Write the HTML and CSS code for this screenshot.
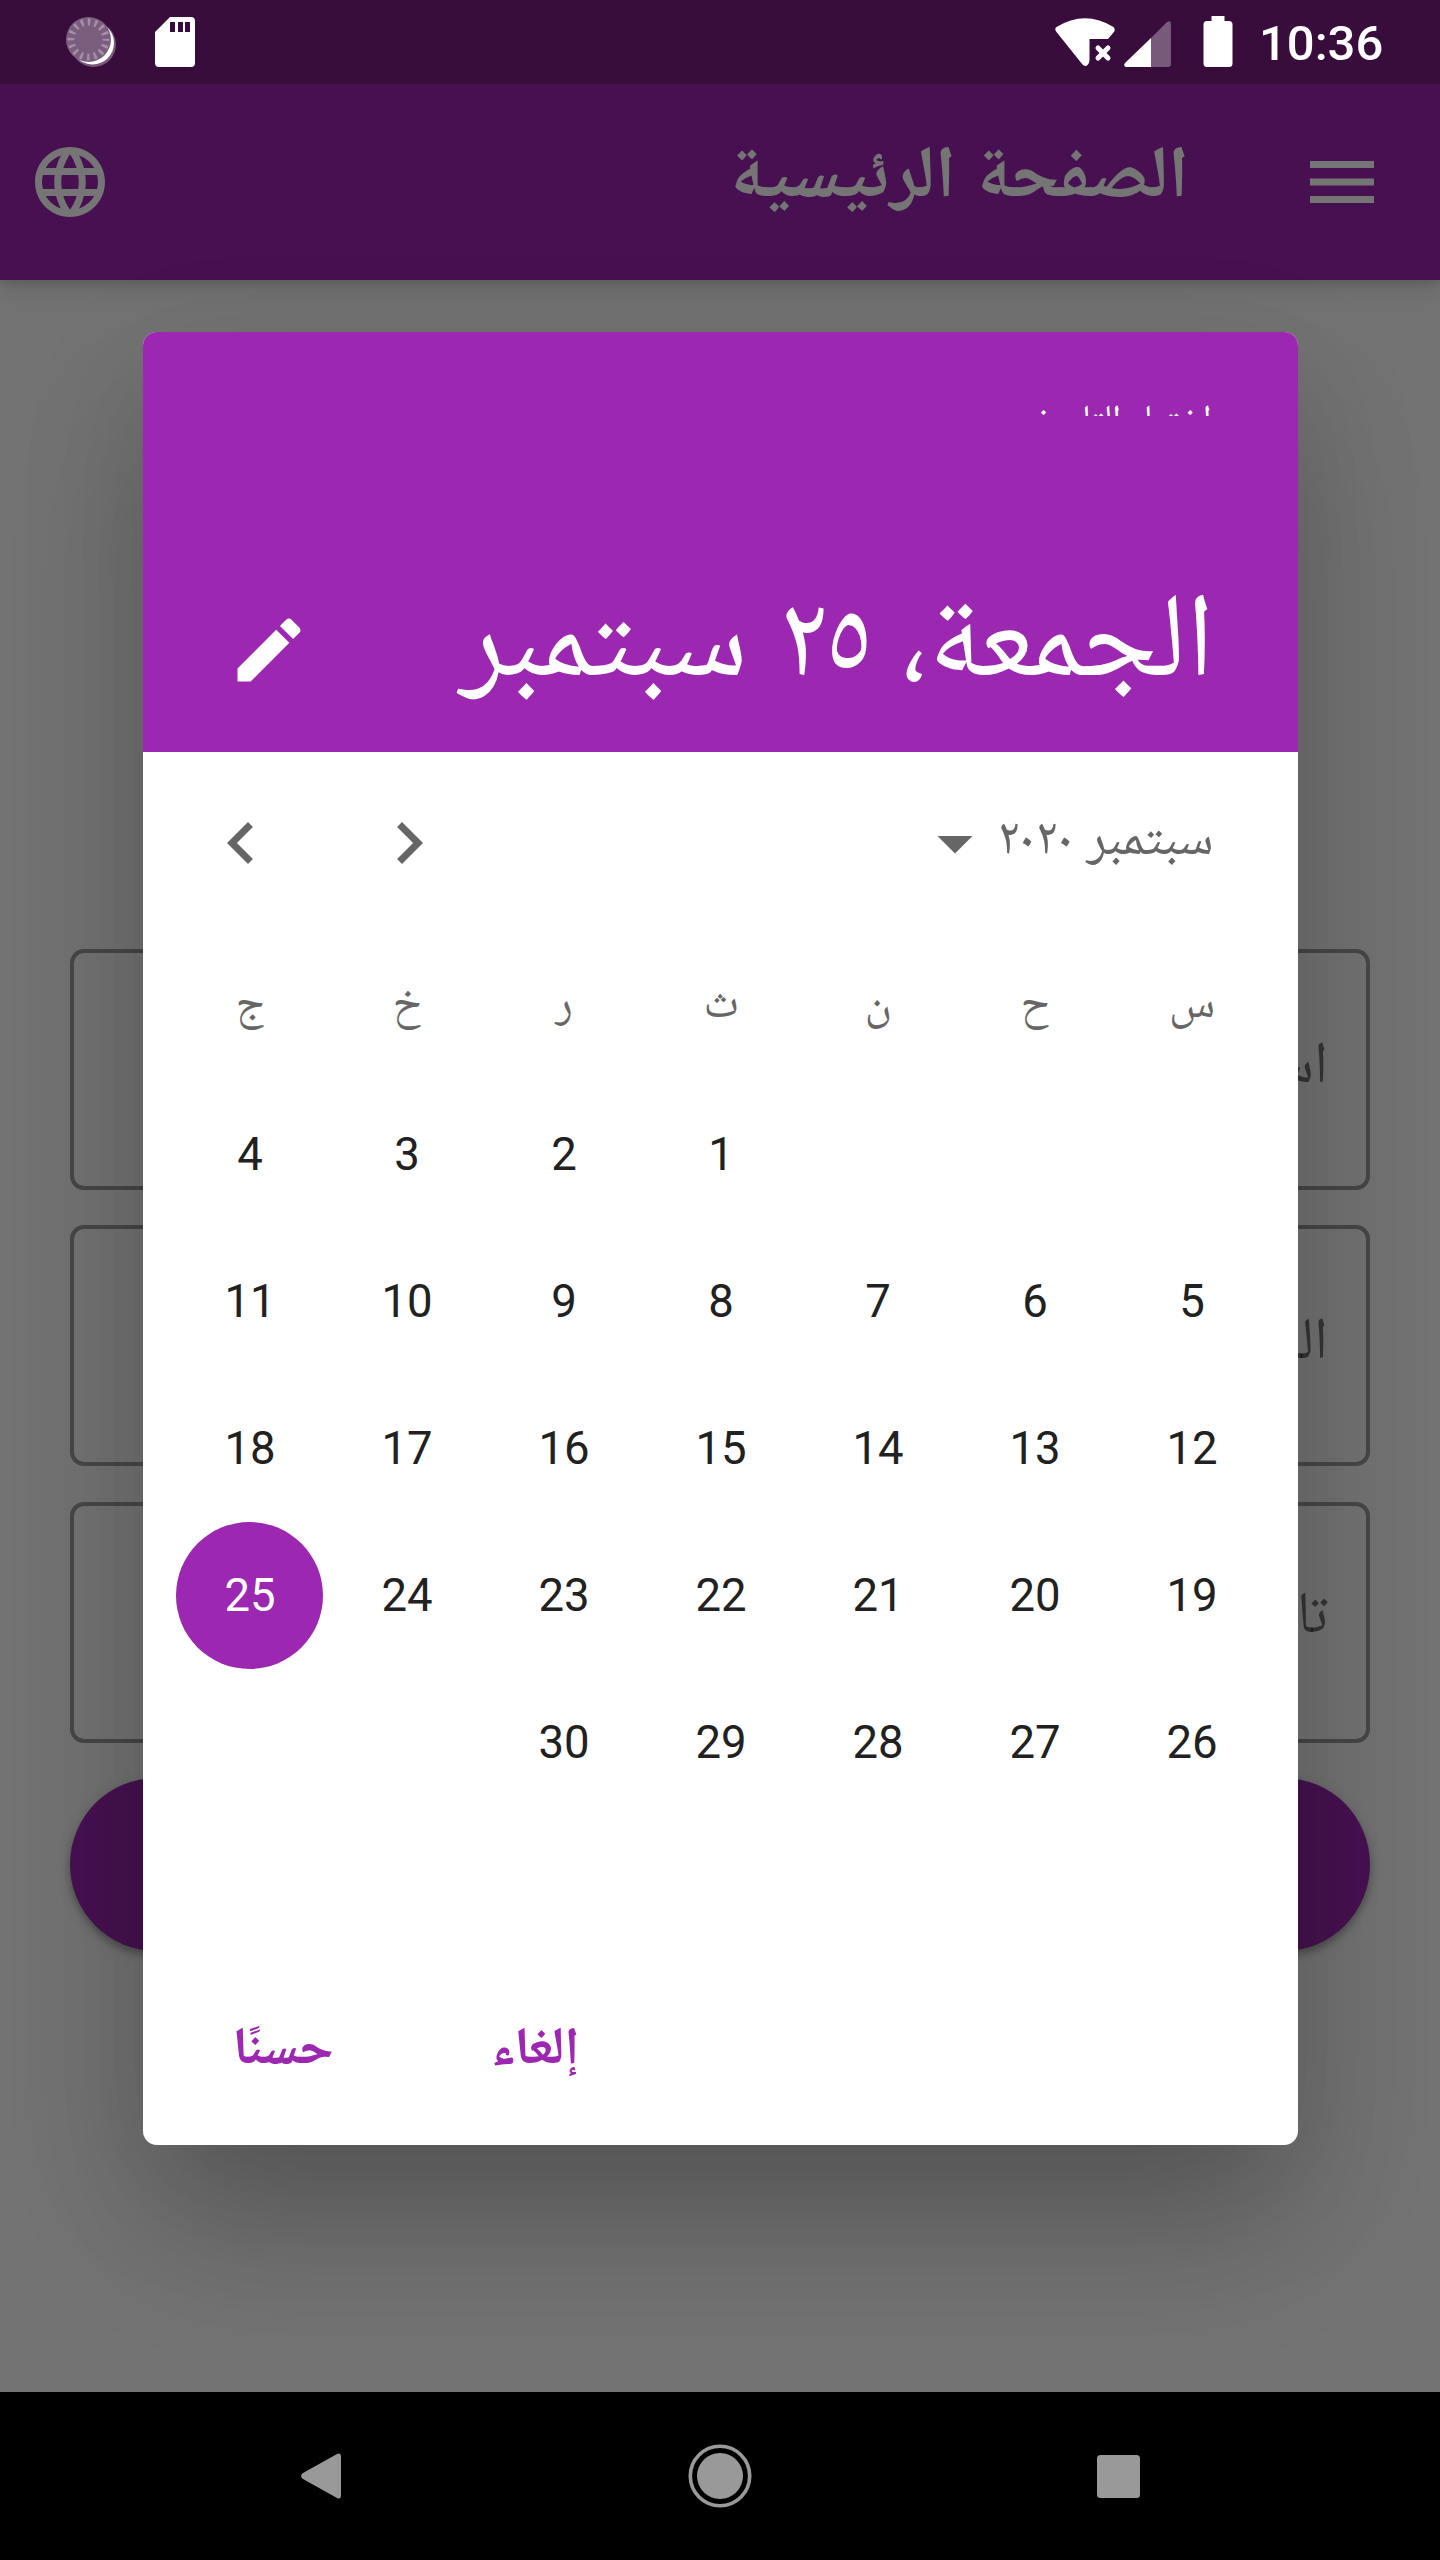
FILE: index.html
```html
<!DOCTYPE html>
<html lang="ar" dir="rtl">
<head>
<meta charset="utf-8">
<title>الصفحة الرئيسية</title>
<link rel="stylesheet" href="styles.css">
</head>
<body>
<div class="screen">
  <header class="status" dir="ltr">
    <div class="status-start">
      <svg class="ic-sync" width="50" height="50" viewBox="0 0 50 50"><circle cx="27.500" cy="27.500" r="22.500" fill="#77597a"/><circle cx="26.500" cy="26" r="21.500" fill="#fff"/><circle cx="22.500" cy="22.500" r="22.500" fill="#7b5d7e"/><circle cx="22.500" cy="22.500" r="17.500" fill="none" stroke="#a68ea9" stroke-width="7" stroke-dasharray="2.600 4.273" stroke-dashoffset="1.300"/></svg>
      <svg width="40" height="50" viewBox="0 0 40 50"><path fill="#fff" fill-rule="evenodd" d="M15 0H36Q40 0 40 4V46Q40 50 36 50H4Q0 50 0 46V15ZM15 5V15H20V5ZM23 5V15H28V5ZM30 5V15H35V5Z"/></svg>
    </div>
    <div class="status-end">
      <svg class="ic-wifi" width="60" height="48" viewBox="0 0 60 48"><path fill="#fff" d="M1.500 9Q30-8.500 58.500 9Q61 12 58.500 14.500L53 21H34.500V42Q34.500 45 32.500 47Q30 49 27.500 46.500L1.500 14Q-1 11 1.500 9Z"/><path stroke="#fff" stroke-width="5" stroke-linecap="round" d="M43 30 53 40M53 30 43 40"/></svg>
      <svg class="ic-cell" width="48" height="48" viewBox="0 0 48 48"><path fill="#775a7a" d="M43 2Q47 0 47 4V44Q47 47 44 47H27V18Z"/><path fill="#fff" d="M27 18V47H2Q-1 46 1 43Z"/></svg>
      <svg class="ic-battery" width="30" height="51" viewBox="0 0 30 51"><path fill="#fff" d="M8.500 0H21.500V5H26Q29.500 5 29.500 8.500V47.500Q29.500 51 26 51H4Q.5 51 .5 47.500V8.500Q.5 5 4 5H8.500Z"/></svg>
      <span class="clock">10:36</span>
    </div>
  </header>
  <div class="appbar">
    <svg class="ic-menu" width="64" height="42" viewBox="0 0 64 42"><path fill="#fff" d="M0 0H64V7H0ZM0 17.500H64V24.500H0ZM0 35H64V42H0Z"/></svg>
    <h1 class="title"><span class="t-title">الصفحة الرئيسية</span></h1>
    <svg class="ic-globe" width="84" height="84" viewBox="0 0 24 24"><path fill="#fff" d="M11.990 2C6.470 2 2 6.480 2 12s4.470 10 9.990 10C17.520 22 22 17.520 22 12S17.520 2 11.990 2zm6.930 6h-2.950c-.32-1.250-.78-2.450-1.380-3.560 1.840.63 3.370 1.910 4.330 3.560zM12 4.040c.83 1.200 1.480 2.530 1.910 3.960h-3.820c.43-1.430 1.080-2.760 1.910-3.960zM4.260 14C4.100 13.360 4 12.690 4 12s.1-1.360.26-2h3.380c-.08.66-.14 1.320-.14 2s.06 1.340.14 2H4.260zm.82 2h2.950c.32 1.250.78 2.450 1.380 3.560-1.840-.63-3.370-1.900-4.330-3.560zm2.950-8H5.080c.96-1.660 2.490-2.930 4.330-3.560C8.810 5.550 8.350 6.750 8.030 8zM12 19.960c-.83-1.200-1.480-2.530-1.910-3.960h3.820c-.43 1.430-1.080 2.760-1.910 3.960zM14.340 14H9.660c-.09-.66-.16-1.320-.16-2s.07-1.350.16-2h4.680c.09.65.16 1.320.16 2s-.07 1.340-.16 2zm.25 5.560c.6-1.110 1.060-2.310 1.380-3.560h2.950c-.96 1.650-2.490 2.930-4.330 3.560zM16.360 14c.08-.66.14-1.320.14-2s-.06-1.340-.14-2h3.380c.16.64.26 1.310.26 2s-.1 1.360-.26 2h-3.380z"/></svg>
  </div>
  <main class="form">
    <div class="field"><span>اسم</span></div>
    <div class="field"><span>السن</span></div>
    <div class="field field-date"><span>تاريخ</span></div>
    <div class="submit"></div>
  </main>
  <nav class="navbar" dir="ltr">
    <svg width="42" height="46" viewBox="0 0 42 46"><path fill="#999" d="M37 1Q41-1 41 4V42Q41 47 37 45L3 26Q-1 23 3 20Z"/></svg>
    <svg width="64" height="64" viewBox="0 0 64 64"><circle cx="32" cy="32" r="29.700" fill="none" stroke="#999" stroke-width="3.600"/><circle cx="32" cy="32" r="23" fill="#999"/></svg>
    <svg width="43" height="43" viewBox="0 0 43 43"><rect width="43" height="43" rx="3.500" fill="#999"/></svg>
  </nav>
  <div class="scrim"></div>
  <section class="dialog">
    <div class="head">
      <div class="help"><span class="t-help">اختيار التاريخ</span></div>
      <div class="head-row">
        <span class="t-date">الجمعة، ٢٥ سبتمبر</span>
        <svg class="ic-edit" width="84" height="84" viewBox="0 0 24 24"><path fill="#fff" d="M3 17.250V21h3.750L17.810 9.940l-3.750-3.750L3 17.250zM20.710 7.040c.39-.39.39-1.020 0-1.410l-2.340-2.340c-.39-.39-1.020-.39-1.410 0l-1.830 1.830 3.750 3.750 1.830-1.830z"/></svg>
      </div>
    </div>
    <div class="month">
      <span class="t-month">سبتمبر ٢٠٢٠</span>
      <svg class="ic-drop" width="84" height="84" viewBox="0 0 24 24"><path fill="#666" d="M7 10l5 5 5-5z"/></svg>
      <span class="arrows">
        <svg width="84" height="84" viewBox="0 0 24 24"><path fill="#666" d="M10 6 8.590 7.410 13.170 12l-4.580 4.590L10 18l6-6z"/></svg>
        <svg width="84" height="84" viewBox="0 0 24 24"><path fill="#666" d="M15.410 7.410 14 6l-6 6 6 6 1.410-1.410L10.830 12z"/></svg>
      </span>
    </div>
    <div class="days">
      <b>س</b><b>ح</b><b>ن</b><b>ث</b><b>ر</b><b>خ</b><b>ج</b>
      <i></i><i></i><i></i><i>1</i><i>2</i><i>3</i><i>4</i>
      <i>5</i><i>6</i><i>7</i><i>8</i><i>9</i><i>10</i><i>11</i>
      <i>12</i><i>13</i><i>14</i><i>15</i><i>16</i><i>17</i><i>18</i>
      <i>19</i><i>20</i><i>21</i><i>22</i><i>23</i><i>24</i><i class="selected">25</i>
      <i>26</i><i>27</i><i>28</i><i>29</i><i>30</i><i></i><i></i>
    </div>
    <div class="actions">
      <span class="t-cancel">إلغاء</span>
      <span class="t-ok">حسنًا</span>
    </div>
  </section>
</div>
</body>
</html>
```
FILE: styles.css
```css
* { box-sizing: border-box; }
body { margin: 0; }
svg { display: block; flex: none; }
.screen {
  position: relative;
  display: flex;
  flex-direction: column;
  width: 1440px;
  height: 2560px;
  overflow: hidden;
  background: #fafafa;
  font-family: Roboto, "Noto Naskh Arabic UI", "Noto Naskh Arabic", "DejaVu Sans", sans-serif;
}
.status {
  position: relative;
  z-index: 3;
  flex: none;
  display: flex;
  justify-content: space-between;
  height: 84px;
  padding: 16px 56px 0 66px;
  background: #380d3b;
}
.status-start { display: flex; gap: 39px; padding-top: 1px; }
.status-end { display: flex; }
.ic-wifi { margin: 2px 9px 0 0; }
.ic-cell { margin: 4px 31px 0 0; }
.ic-battery { margin-right: 26px; }
.clock {
  width: 125px;
  color: #fff;
  font: 500 49px/56px Roboto, sans-serif;
  white-space: nowrap;
}
.appbar {
  position: relative;
  flex: none;
  display: flex;
  align-items: center;
  height: 196px;
  padding: 0 66px 0 28px;
  background: #9c27b0;
  box-shadow: 0 4px 10px rgba(0, 0, 0, .12), 0 10px 24px rgba(0, 0, 0, .1);
}
.title {
  flex: 1;
  margin: 0 121px 0 0;
  padding-top: 2px;
  color: #fff;
  font-size: 73.5px;
  font-weight: 700;
  line-height: 1;
}
.title span, .head span, .t-month, .actions span { display: inline-block; white-space: nowrap; }
.form {
  flex: 1;
  display: flex;
  flex-direction: column;
  gap: 35.5px;
  padding: 668.5px 70px 0;
}
.field {
  height: 241px;
  padding: 84px 38px 0;
  border: 4px solid rgba(0, 0, 0, .38);
  border-radius: 14px;
  color: rgba(0, 0, 0, .54);
  font-size: 59px;
  line-height: 66px;
}
.field-date { padding-top: 81px; }
.submit {
  height: 173px;
  border-radius: 87px;
  background: #9c27b0;
  box-shadow: 0 5px 7px rgba(0, 0, 0, .22), 0 3px 14px rgba(0, 0, 0, .16);
}
.navbar {
  position: relative;
  z-index: 3;
  flex: none;
  display: flex;
  align-items: center;
  justify-content: space-between;
  height: 168px;
  padding: 0 300px;
  background: #000;
}
.scrim {
  position: absolute;
  z-index: 1;
  inset: 0;
  background: rgba(0, 0, 0, .54);
}
.dialog {
  position: absolute;
  z-index: 2;
  top: 331.5px;
  left: 142.5px;
  display: flex;
  flex-direction: column;
  width: 1155px;
  height: 1813px;
  overflow: hidden;
  border-radius: 14px;
  background: #fff;
  box-shadow: 0 92px 140px -16px rgba(0, 0, 0, .2), 0 40px 130px 4px rgba(0, 0, 0, .1);
}
.head {
  flex: none;
  height: 420px;
  padding: 56px 86px 0 84px;
  background: #9c27b0;
  color: #fff;
}
.help { height: 28px; overflow: hidden; font-size: 36.5px; line-height: 70px; }
.head-row { display: flex; align-items: center; justify-content: space-between; margin-top: 169.5px; }
.t-date { margin-right: -3px; font-size: 119.3px; line-height: 130px; }
.month {
  flex: none;
  display: flex;
  align-items: center;
  height: 182px;
  padding: 0 84px 0 56px;
  color: #666;
}
.t-month { width: 212px; padding-bottom: 4px; font-size: 52.5px; }
.ic-drop { margin-right: 5px; }
.arrows { display: flex; gap: 84px; margin-right: auto; }
.days {
  flex: none;
  display: grid;
  grid-template-columns: repeat(7, 157px);
  grid-auto-rows: 147px;
  margin: 0 28px;
}
.days b, .days i {
  display: flex;
  align-items: center;
  justify-content: center;
  padding: 2px 0 0 2px;
  color: #212121;
  font: 400 45.5px/1 Roboto, "Noto Naskh Arabic UI", "Noto Naskh Arabic", "DejaVu Sans", sans-serif;
}
.days b { color: #666; }
.days .selected {
  width: 147px;
  margin: 0 5px;
  border-radius: 50%;
  background: #9c27b0;
  color: #fff;
}
.actions {
  display: flex;
  justify-content: flex-end;
  gap: 157px;
  margin-top: 199px;
  padding-left: 90px;
  color: #9c27b0;
  font-size: 52.5px;
  font-weight: 700;
}
```
